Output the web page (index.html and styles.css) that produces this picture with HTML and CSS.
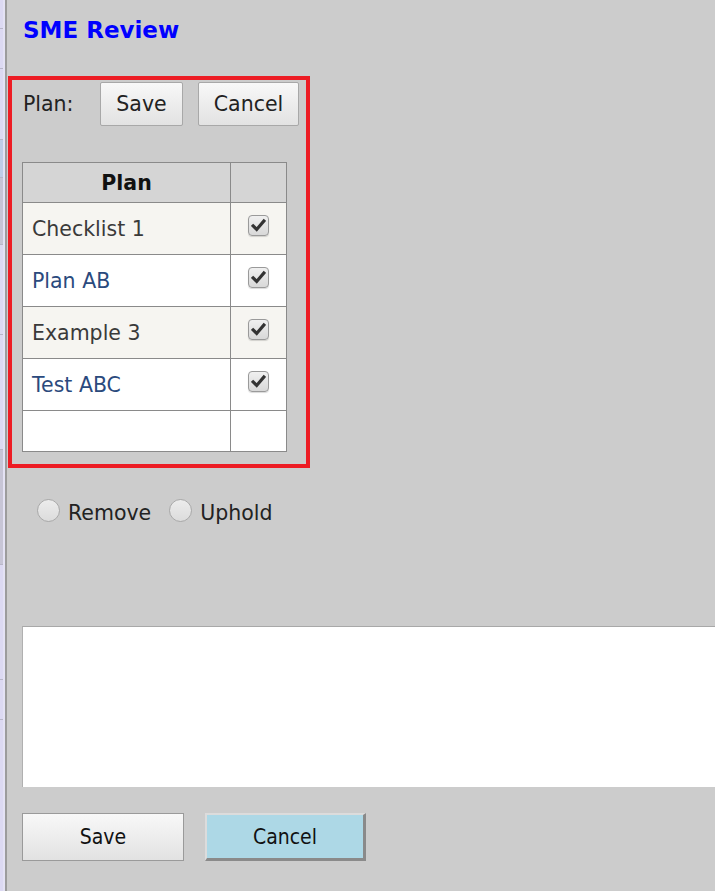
FILE: index.html
```html
<!DOCTYPE html>
<html>
<head>
<meta charset="utf-8">
<link rel="stylesheet" href="styles.css">
</head>
<body>
<div class="page">
  <div class="rail">
    <div class="seg" style="height:29px"></div>
    <div class="seg" style="height:40px"></div>
    <div class="seg" style="height:71px"></div>
    <div class="seg blue" style="height:38px"></div>
    <div class="seg grey" style="height:67px"></div>
    <div class="seg" style="height:90px"></div>
    <div class="seg" style="height:115px"></div>
    <div class="seg grey" style="height:115px"></div>
    <div class="seg" style="height:115px"></div>
    <div class="seg" style="height:40px"></div>
    <div class="seg last"></div>
  </div>
  <div class="bar"></div>
  <div class="panel">
    <h1 class="title">SME Review</h1>
    <div class="planbox">
      <div class="planrow">
        <span class="planlabel">Plan:</span>
        <button class="btn btn-save">Save</button>
        <button class="btn btn-cancel">Cancel</button>
      </div>
      <table class="plantable">
        <colgroup><col class="col1"><col class="col2"></colgroup>
        <thead>
          <tr class="head"><th class="c1">Plan</th><th class="c2"></th></tr>
        </thead>
        <tbody>
          <tr class="odd"><td class="c1 dark">Checklist 1</td><td class="c2"><span class="chk"><svg viewBox="0 0 14 14" width="15" height="15"><path d="M2 7.4 L5.3 10.7 L12 2.8" fill="none" stroke="#333" stroke-width="3" stroke-linecap="square"/></svg></span></td></tr>
          <tr class="even"><td class="c1 link">Plan AB</td><td class="c2"><span class="chk"><svg viewBox="0 0 14 14" width="15" height="15"><path d="M2 7.4 L5.3 10.7 L12 2.8" fill="none" stroke="#333" stroke-width="3" stroke-linecap="square"/></svg></span></td></tr>
          <tr class="odd"><td class="c1 dark">Example 3</td><td class="c2"><span class="chk"><svg viewBox="0 0 14 14" width="15" height="15"><path d="M2 7.4 L5.3 10.7 L12 2.8" fill="none" stroke="#333" stroke-width="3" stroke-linecap="square"/></svg></span></td></tr>
          <tr class="even"><td class="c1 link">Test ABC</td><td class="c2"><span class="chk"><svg viewBox="0 0 14 14" width="15" height="15"><path d="M2 7.4 L5.3 10.7 L12 2.8" fill="none" stroke="#333" stroke-width="3" stroke-linecap="square"/></svg></span></td></tr>
          <tr class="empty"><td class="c1"></td><td class="c2"></td></tr>
        </tbody>
      </table>
    </div>
    <div class="radios">
      <label class="radio"><span class="dot"></span><span class="rlabel">Remove</span></label>
      <label class="radio"><span class="dot"></span><span class="rlabel">Uphold</span></label>
    </div>
    <div class="notes"></div>
    <div class="actions">
      <button class="abtn abtn-save">Save</button>
      <button class="abtn abtn-cancel">Cancel</button>
    </div>
  </div>
</div>
</body>
</html>
```
FILE: styles.css
```css
html, body {
  margin: 0;
  padding: 0;
  overflow: hidden;
  background: #cccccc;
}
body {
  font-family: "DejaVu Sans", Verdana, sans-serif;
  width: 715px;
  height: 891px;
}
.page {
  display: flex;
  height: 891px;
}
.rail {
  width: 3px;
  background: #dcd9f2;
  display: flex;
  flex-direction: column;
  border-right: 2px solid #e4e2f4;
}
.seg {
  border-bottom: 1px solid #b8b6c8;
  box-sizing: border-box;
  flex: none;
}
.seg.blue { background: #bfcde8; }
.seg.grey { background: #c7c5d6; }
.seg.last { flex: 1; border-bottom: none; }
.bar {
  width: 2px;
  background: #9c9c9c;
}
.panel {
  flex: 1;
  padding-left: 1px;
  min-width: 0;
}
.title {
  margin: 17px 0 0 15px;
  height: 26px;
  line-height: 26px;
  font-size: 23px;
  font-weight: bold;
  color: #0000ff;
}
.planbox {
  margin-top: 33px;
  border: 4px solid #ed1c24;
  padding: 2px 0 12px 10px;
  box-sizing: border-box;
  width: 302px;
}
.planrow {
  display: flex;
  align-items: center;
  height: 44px;
}
.planlabel {
  width: 78px;
  padding-left: 1px;
  box-sizing: border-box;
  font-size: 20.5px;
  color: #222;
}
.btn {
  height: 44px;
  border: 1px solid #a8a8a8;
  border-radius: 2px;
  background: linear-gradient(#f8f8f8, #e2e2e2);
  font-family: "DejaVu Sans", sans-serif;
  font-size: 20.5px;
  color: #222;
  padding: 0;
}
.btn-save { width: 83px; }
.btn-cancel { width: 101px; margin-left: 15px; }
.plantable {
  margin-top: 36px;
  border-collapse: collapse;
  table-layout: fixed;
  width: 264px;
  font-size: 20.5px;
}
.col1 { width: 208px; }
.col2 { width: 56px; }
.plantable td, .plantable th {
  border: 1px solid #8a8a8a;
  padding: 0 0 0 9px;
}
.plantable .c1 { text-align: left; }
.plantable .c2 { text-align: center; padding: 0; vertical-align: top; }
.plantable th.c1 { text-align: center; padding: 0; }
.head { height: 40px; background: #d5d5d5; }
.head th { font-weight: bold; color: #111; }
.odd { height: 52px; background: #f6f5f1; }
.even { height: 52px; background: #ffffff; }
.empty { height: 41px; background: #ffffff; }
.dark { color: #3a3a3a; }
.link { color: #2b4a7d; }
.chk {
  display: inline-flex;
  align-items: center;
  justify-content: center;
  width: 19px;
  height: 19px;
  margin-top: 12px;
  margin-right: 1px;
  border: 1px solid #9a9a9a;
  border-radius: 4px;
  background: linear-gradient(#f0f0f0, #d8d8d8);
  box-shadow: 0 1px 1px rgba(0,0,0,0.15);
}
.chk svg { display: block; }
.radios {
  display: flex;
  align-items: center;
  margin-top: 31px;
  padding-left: 29px;
  height: 28px;
}
.radio {
  display: flex;
  align-items: center;
  margin-right: 18px;
}
.dot {
  width: 21px;
  height: 21px;
  border-radius: 50%;
  border: 1px solid #a9a9a9;
  background: linear-gradient(#ececec, #dcdcdc);
  margin-top: -6px;
}
.rlabel {
  margin-left: 8px;
  font-size: 20.5px;
  color: #222;
}
.notes {
  margin-top: 99px;
  margin-left: 14px;
  height: 160px;
  width: 720px;
  background: #ffffff;
  border-top: 1px solid #a8a8a8;
  border-left: 1px solid #b0b0b0;
}
.actions {
  display: flex;
  margin-top: 26px;
  margin-left: 14px;
}
.abtn {
  height: 48px;
  width: 162px;
  font-family: "DejaVu Sans Condensed", "DejaVu Sans", sans-serif;
  font-size: 21px;
  color: #111;
  padding: 0;
}
.abtn-save {
  border: 1px solid #9a9a9a;
  background: linear-gradient(#f8f8f8, #e2e2e2);
}
.abtn-cancel {
  margin-left: 21px;
  width: 161px;
  background: #add8e6;
  border-style: solid;
  border-width: 2px 3px 3px 2px;
  border-color: #dcdcdc #8a8a8a #8a8a8a #dcdcdc;
}
```
